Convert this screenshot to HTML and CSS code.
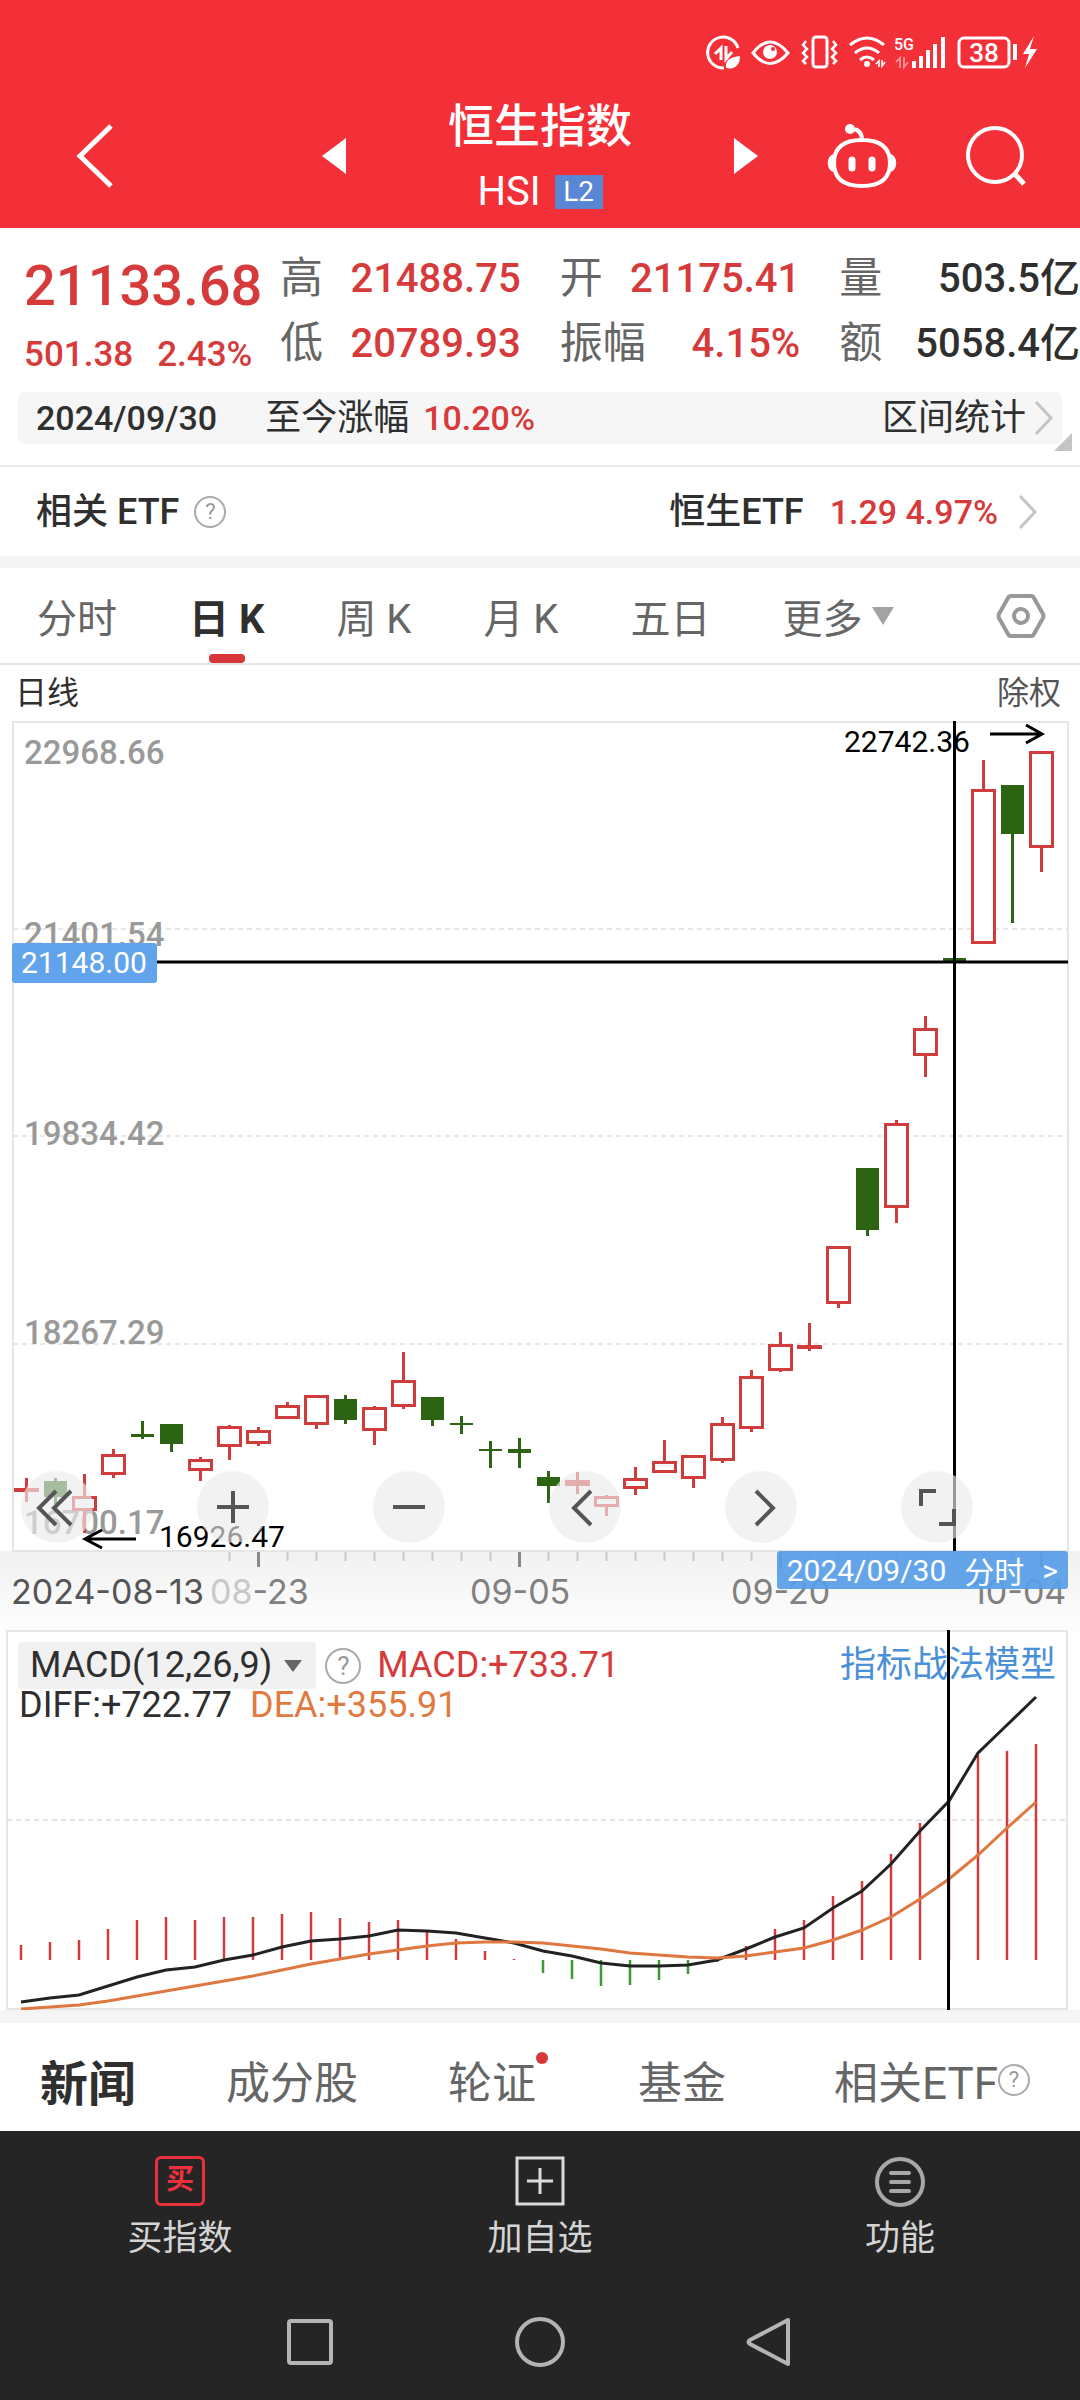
FILE: index.html
```html
<!DOCTYPE html>
<html lang="zh-CN">
<head>
<meta charset="utf-8">
<meta name="viewport" content="width=device-width">
<title>恒生指数 HSI</title>
<link rel="stylesheet" href="styles.css">
</head>
<body>
<header class="header">
  <div class="status">
    <svg class="status-icons" viewBox="702 30 336 46" fill="none" stroke="#fff" stroke-width="3">
      <path d="M738 48a15.500 15.500 0 1 0-14 20"/>
      <path d="M715 54l6-6v12M732 52l-6 7V46" stroke-width="3"/>
      <path d="M726 68c-1-8 4-11 14-12 0 9-5 14-14 12z" fill="#fff" stroke="none"/>
      <path d="M753 53q17-22 35 0q-18 21-35 0z"/>
      <circle cx="770" cy="52" r="7" fill="#fff" stroke="none"/><circle cx="773" cy="49" r="2" fill="#f32f38" stroke="none"/>
      <rect x="813" y="37" width="14" height="30" rx="3"/>
      <path d="M806 41l-3 4 4 4-4 4 4 4-4 4 3 3M833 41l3 4-4 4 4 4-4 4 4 4-3 3" stroke-width="2.5"/>
      <path d="M850 45q17-14 34 0M855 53q12-10 24 0M860 60q7-6 14 0" stroke-width="3"/>
      <circle cx="867" cy="64" r="3" fill="#fff" stroke="none"/>
      <path d="M876 64l3-3v6M885 62l-3 4v-6" stroke-width="1.6"/>
      <text x="894" y="50" class="t5g">5G</text>
      <path d="M896 62l4-4v10M908 62l-4 5V57" stroke-width="2" opacity=".45"/>
      <path d="M914 61v7M921 56v12M928 50v18M935 44v24M943 37v31" stroke-width="4"/>
      <rect x="959" y="38" width="50" height="29" rx="5"/>
      <path d="M1015 44v16" stroke-width="4"/>
      <text x="984" y="62" class="tbat">38</text>
      <path d="M1034 36l-11 18h6l-4 14 12-19h-7z" fill="#fff" stroke="none"/>
    </svg>
  </div>
  <div class="titlebar">
    <div class="side left">
      <button aria-label="返回"><svg width="38" height="64" viewBox="0 0 38 64"><path d="M35 2L4 32l31 30" fill="none" stroke="#fff" stroke-width="5"/></svg></button>
      <button aria-label="上一个"><svg width="24" height="36" viewBox="0 0 24 36"><path d="M24 0v36L0 18z" fill="#fff"/></svg></button>
    </div>
    <div class="title">
      <h1>恒生指数</h1>
      <div class="code">HSI <span class="level">L2</span></div>
    </div>
    <div class="side right">
      <button aria-label="下一个"><svg width="24" height="36" viewBox="0 0 24 36"><path d="M0 0v36l24-18z" fill="#fff"/></svg></button>
      <button aria-label="助手"><svg width="70" height="66" viewBox="0 0 70 66" fill="none" stroke="#fff" stroke-width="4"><path d="M35 17c20 0 28 9 28 23s-8 23-28 23S7 54 7 40s8-23 28-23zM35 17c0-8-4-11-11-11"/><circle cx="23" cy="6" r="5" fill="#fff" stroke="none"/><path d="M7 32c-7 1-7 15 0 16zM63 32c7 1 7 15 0 16z" fill="#fff" stroke-width="2"/><path d="M25 37v8M45 37v8" stroke-width="7" stroke-linecap="round"/></svg></button>
      <button aria-label="搜索"><svg width="60" height="62" viewBox="0 0 60 62" fill="none" stroke="#fff" stroke-width="4"><circle cx="29" cy="30" r="27"/><path d="M48 48l10 11" stroke-width="5"/></svg></button>
    </div>
  </div>
</header>

<main>
  <section class="quote">
    <div class="price">
      <strong>21133.68</strong>
      <div class="change"><span>501.38</span><span>2.43%</span></div>
    </div>
    <dl class="stats">
      <div><dt>高</dt><dd class="up">21488.75</dd></div>
      <div><dt>开</dt><dd class="up">21175.41</dd></div>
      <div><dt>量</dt><dd>503.5亿</dd></div>
      <div><dt>低</dt><dd class="up">20789.93</dd></div>
      <div><dt>振幅</dt><dd class="up">4.15%</dd></div>
      <div><dt>额</dt><dd>5058.4亿</dd></div>
    </dl>
  </section>
  <section class="range">
    <span class="date">2024/09/30</span>
    <span class="since">至今涨幅</span>
    <span class="up">10.20%</span>
    <button class="range-link">区间统计<svg width="20" height="36" viewBox="0 0 20 36"><path d="M2 2l15 16L2 34" fill="none" stroke="#c4c4c4" stroke-width="3"/></svg></button>
    <i class="corner"></i>
  </section>
  <section class="etf">
    <span>相关 ETF</span>
    <button class="help" aria-label="说明">?</button>
    <a href="#etf" class="etf-link"><span>恒生ETF</span><span class="up">1.29 4.97%</span><svg width="20" height="36" viewBox="0 0 20 36"><path d="M2 2l15 16L2 34" fill="none" stroke="#c4c4c4" stroke-width="3"/></svg></a>
  </section>
  <nav class="periods">
    <button>分时</button>
    <button class="active">日 K</button>
    <button>周 K</button>
    <button>月 K</button>
    <button>五日</button>
    <button class="more">更多<i class="caret"></i></button>
    <button class="settings" aria-label="设置"><svg width="50" height="46" viewBox="0 0 50 46" fill="none" stroke="#999" stroke-width="4"><path d="M15 3h20q2 0 3 2l9 16q1 2 0 4l-9 16q-1 2-3 2H15q-2 0-3-2L3 25q-1-2 0-4l9-16q1-2 3-2z"/><circle cx="25" cy="23" r="7"/></svg></button>
  </nav>
  <div class="caption"><span>日线</span><span class="adjust">除权</span></div>

  <section class="kline">
    <svg id="kline" viewBox="0 721 1080 899"></svg>
    <div class="tools">
      <button aria-label="最早"><svg viewBox="0 0 72 72"><path d="M35 20L18 37l17 17M50 20L33 37l17 17"/></svg></button>
      <button aria-label="放大"><svg viewBox="0 0 72 72"><path d="M36 20v32M20 36h32"/></svg></button>
      <button aria-label="缩小"><svg viewBox="0 0 72 72"><path d="M20 36h32"/></svg></button>
      <button aria-label="左移"><svg viewBox="0 0 72 72"><path d="M42 20L25 37l17 17"/></svg></button>
      <button aria-label="右移"><svg viewBox="0 0 72 72"><path d="M31 20l17 17-17 17"/></svg></button>
      <button aria-label="全屏"><svg viewBox="0 0 72 72"><path d="M20 35V20h15M53 38v15H38"/></svg></button>
    </div>
    <button class="day-tag"><span>2024/09/30</span><span>分时</span><span>&gt;</span></button>
  </section>

  <section class="macd">
    <svg id="macd" viewBox="0 1620 1080 390"></svg>
    <div class="legend">
      <button class="indicator">MACD(12,26,9)<i class="caret small"></i></button>
      <button class="help" aria-label="指标说明">?</button>
      <span class="up">MACD:+733.71</span>
      <a href="#model">指标战法模型</a>
    </div>
    <div class="legend second"><span>DIFF:+722.77</span><span class="dea">DEA:+355.91</span></div>
    <i class="cross"></i>
  </section>

  <nav class="news">
    <button class="active">新闻</button>
    <button>成分股</button>
    <button class="dot">轮证</button>
    <button>基金</button>
    <button class="with-help">相关ETF<span class="help">?</span></button>
  </nav>
</main>

<footer class="footer">
  <nav class="actions">
    <button><span class="buy">买</span>买指数</button>
    <button><svg width="50" height="50" viewBox="0 0 50 50" fill="none" stroke="#dcdcdc" stroke-width="3"><path d="M2 2h46v46H2zM25 12v26M12 25h26"/></svg>加自选</button>
    <button><svg width="52" height="52" viewBox="0 0 52 52" fill="none" stroke="#a8a8a8" stroke-width="4"><circle cx="26" cy="26" r="23"/><path d="M17 17h18M17 26h18M17 35h18" stroke-linecap="round"/></svg>功能</button>
  </nav>
  <nav class="system">
    <button aria-label="最近"><svg width="50" height="50" viewBox="0 0 50 50"><rect x="4" y="4" width="42" height="42" rx="2"/></svg></button>
    <button aria-label="主页"><svg width="50" height="50" viewBox="0 0 50 50"><circle cx="25" cy="25" r="23"/></svg></button>
    <button aria-label="后退"><svg width="50" height="50" viewBox="0 0 50 50"><path d="M43 3v44L5 27q-3-2 0-4z" stroke-linejoin="round"/></svg></button>
  </nav>
</footer>
<script src="chart.js"></script>
</body>
</html>
```

FILE: styles.css
```css
* { box-sizing: border-box; margin: 0; padding: 0; }
body { font-family: Roboto, "Noto Sans CJK SC", sans-serif; color: #2f2f2f; background: #252525; }
button { font: inherit; color: inherit; background: none; border: 0; display: flex; align-items: center; }
a { color: inherit; text-decoration: none; }
svg { display: block; }
main { background: #fff; }
.up { color: #d63a3a; }

.header { background: #f32f38; height: 228px; }
.status { height: 90px; padding: 30px 42px 0 0; display: flex; justify-content: flex-end; }
.status-icons { width: 336px; height: 46px; }
.status-icons text { fill: #fff; stroke: none; font-weight: 500; }
.t5g { font-size: 16px; }
.tbat { font-size: 26px; text-anchor: middle; }
.titlebar { display: grid; grid-template-columns: 1fr auto 1fr; align-items: center; color: #fff; }
.side { display: flex; justify-content: space-between; align-items: center; }
.left { padding: 0 102px 0 76px; }
.right { padding: 0 54px 0 102px; }
.title { text-align: center; }
.title h1 { font-size: 46px; line-height: 72px; font-weight: 500; }
.code { font-size: 40px; line-height: 60px; display: flex; justify-content: center; align-items: center; gap: 14px; }
.level { background: #5a86d6; font-size: 28px; line-height: 34px; width: 48px; }

.quote { display: flex; padding: 18px 0 8px 24px; }
.price { width: 256px; color: #d63a3a; }
.price strong { display: block; font-size: 56px; line-height: 80px; font-weight: 500; }
.change { display: flex; gap: 24px; font-size: 35px; line-height: 58px; font-weight: 500; }
.stats { flex: 1; display: grid; grid-template-columns: 1fr 1fr 1fr; column-gap: 39px; font-size: 40px; line-height: 65px; height: 138px; align-content: start; }
.stats div { display: flex; justify-content: space-between; white-space: nowrap; }
.stats dt { color: #666; font-size: 43px; }
.stats dd { font-weight: 500; }

.range { position: relative; margin: 0 18px; padding: 0 8px 0 18px; height: 52px; background: #f6f6f6; border-radius: 6px; display: flex; align-items: center; font-size: 36px; line-height: 48px; }
.since { margin: 0 14px 0 48px; }
.date, .range .up { font-weight: 500; font-size: 34px; }
.range-link { margin-left: auto; gap: 8px; }
.corner { position: absolute; right: -10px; bottom: -7px; border: 9px solid transparent; border-right-color: #c4c4c4; border-bottom-color: #c4c4c4; }

.etf { margin-top: 21px; height: 91px; border-top: 2px solid #ebebeb; padding: 0 42px 0 36px; display: flex; align-items: center; gap: 15px; font-size: 36px; font-weight: 500; line-height: 48px; }
.etf-link { margin-left: auto; display: flex; align-items: center; }
.etf-link .up { font-size: 34px; margin: 0 20px 0 26px; }
.help { width: 32px; height: 32px; border: 2px solid #aaa; border-radius: 50%; color: #999; font-size: 22px; font-weight: 400; line-height: 28px; display: flex; justify-content: center; }

.periods { height: 109px; border-top: 12px solid #f5f5f5; border-bottom: 2px solid #e6e6e6; padding: 0 34px 0 37px; display: flex; gap: 72px; font-size: 40px; color: #666; white-space: nowrap; }
.periods .active { position: relative; color: #2f2f2f; font-weight: 700; }
.active::after { content: ""; position: absolute; }
.periods .active::after { left: 50%; bottom: 0; width: 36px; height: 9px; margin-left: -18px; border-radius: 4px; background: #d9363a; }
.caret { border: 11px solid transparent; border-top: 18px solid #a3a3a3; border-bottom: 0; margin-left: 10px; }
.caret.small { border-width: 12px 9px 0; border-top-color: #666; margin-left: 12px; }
.settings { margin-left: auto; }

.caption { height: 56px; padding: 0 19px 0 15px; display: flex; justify-content: space-between; align-items: center; font-size: 32px; line-height: 48px; }
.adjust { color: #555; }

.kline, .macd { position: relative; }
.kline svg, .macd svg { width: 100%; }
.kline text { font-size: 33px; fill: #999; }
.kline .scale { font-weight: 500; }
.kline .small { font-size: 30px; font-weight: 400; fill: #000; }
.kline .onblue { font-size: 30px; fill: #fff; }
.kline .axis { font-family: Inter, sans-serif; font-size: 34px; fill: #808080; }
.kline .first { fill: #555; }
.kline .fade { fill: #c8c8c8; }
.tools { position: absolute; left: 0; right: 0; bottom: 77px; padding: 0 107px 0 21px; display: flex; justify-content: space-between; }
.tools button { width: 72px; height: 72px; border-radius: 50%; background: rgba(235, 235, 235, 0.65); }
.tools path { fill: none; stroke: #555; stroke-width: 4; }
.day-tag { position: absolute; right: 12px; bottom: 31px; height: 38px; padding: 0 10px; gap: 18px; background: rgba(88, 158, 232, 0.93); color: #fff; font-size: 30px; border-radius: 3px; }

.legend { position: absolute; top: 22px; left: 18px; right: 24px; display: flex; align-items: center; font-size: 36px; line-height: 47px; }
.legend.second { top: 62px; left: 19px; gap: 18px; }
.indicator { height: 47px; padding: 0 14px 0 12px; background: #f1f1f1; border-radius: 4px; }
.legend .help { width: 36px; height: 36px; font-size: 26px; line-height: 32px; margin: 0 16px 0 9px; }
.legend a { margin-left: auto; color: #4a90d9; }
.dea { color: #e07a3f; }
.cross { position: absolute; left: 87.7%; top: 10px; bottom: 0; width: 3px; background: #000; }

.news { height: 121px; border-top: 13px solid #f5f5f5; padding: 6px 50px 0 40px; display: flex; gap: 90px; font-size: 44px; color: #666; }
.news .active { font-size: 48px; font-weight: 700; color: #2f2f2f; }
.news .with-help { margin-left: auto; }
.dot { position: relative; padding-right: 12px; }
.dot::after { content: ""; position: absolute; right: 0; top: 23px; width: 12px; height: 12px; border-radius: 50%; background: #d9363a; }

.footer { background: #252525; color: #d4d4d4; }
.actions { display: grid; grid-template-columns: 1fr 1fr 1fr; padding-top: 25px; font-size: 35px; line-height: 52px; }
.actions button { flex-direction: column; justify-content: space-between; height: 109px; }
.buy { width: 50px; height: 50px; border: 3px solid #e8313b; border-radius: 6px; color: #f0303c; font-size: 28px; font-weight: 700; line-height: 42px; }
.system { display: flex; justify-content: center; gap: 180px; padding-top: 52px; padding-bottom: 33px; }
.system svg { fill: none; stroke: #b4b4b4; stroke-width: 4; }
```

FILE: chart.js
```js
const RED = '#d03c3c', GREEN = '#2d6413', STEP = 29;

// Each candle: direction, high, body top, body bottom, low
const candles = [
  ['r',1478,1488,1492,1502],['g',1478,1481,1497,1504],['r',1474,1496,1511,1533],['r',1449,1454,1475,1478],
  ['g',1421,1434,1437,1439],['g',1424,1424,1444,1452],['r',1457,1459,1471,1481],['r',1425,1426,1447,1460],
  ['r',1427,1430,1444,1446],['r',1402,1405,1419,1419],['r',1395,1395,1425,1429],['g',1395,1399,1420,1424],
  ['r',1406,1407,1431,1445],['r',1352,1380,1407,1409],['g',1397,1397,1420,1426],['g',1416,1423,1425,1434],
  ['g',1441,1449,1451,1468],['g',1438,1449,1453,1468],['g',1471,1477,1486,1503],['r',1472,1480,1486,1494],
  ['r',1495,1496,1507,1516],['r',1467,1478,1489,1495],['r',1440,1461,1473,1473],['r',1455,1455,1479,1488],
  ['r',1417,1423,1461,1463],['r',1370,1376,1429,1432],['r',1332,1344,1371,1372],['r',1323,1345,1349,1351],
  ['r',1246,1246,1304,1308],['g',1168,1168,1230,1236],['r',1120,1123,1208,1223],['r',1016,1028,1056,1077],
  ['g',958,958,962,962],['r',760,789,944,944],['g',785,785,834,923],['r',751,751,848,872]
];

const line = (x1, y1, x2, y2, color, w, extra = '') =>
  `<path d="M${x1} ${y1}L${x2} ${y2}" fill="none" stroke="${color}" stroke-width="${w}" ${extra}/>`;
const text = (x, y, cls, s) => `<text x="${x}" y="${y}" class="${cls}">${s}</text>`;
const dashed = 'stroke-dasharray="5 4"';

let k = '<defs><linearGradient id="shade" x2="0" y2="1"><stop stop-color="#f1f1f1"/><stop offset="1" stop-color="#fcfcfc"/></linearGradient></defs>';
k += '<rect x="0" y="1551" width="1080" height="69" fill="url(#shade)"/>';
k += '<rect x="13" y="722" width="1055" height="829" fill="none" stroke="#e6e6e6" stroke-width="2"/>';
[929, 1136, 1344].forEach(y => k += line(13, y, 1068, y, '#e0e0e0', 1.5, dashed));
[['22968.66', 764], ['21401.54', 946], ['19834.42', 1145], ['18267.29', 1344], ['16700.17', 1534]]
  .forEach(([s, y]) => k += text(24, y, 'scale', s));
for (let i = 7; i < 36; i++) {
  const major = i % 9 === 8;
  k += line(26.5 + i * STEP, 1552, 26.5 + i * STEP, major ? 1567 : 1561, major ? '#888' : '#c8c8c8', major ? 3 : 2);
}
candles.forEach(([d, hi, top, bot, lo], i) => {
  const x = 26.5 + i * STEP, c = d === 'r' ? RED : GREEN;
  k += line(x, hi, x, top, c, 3) + line(x, bot, x, lo, c, 3);
  if (d === 'g' || bot - top < 7) {
    const w = d === 'r' ? 25 : 23;
    k += `<rect x="${x - w / 2}" y="${top}" width="${w}" height="${bot - top}" fill="${c}"/>`;
  } else {
    k += `<rect x="${x - 11}" y="${top + 1.5}" width="22" height="${bot - top - 3}" fill="#fff" stroke="${c}" stroke-width="3"/>`;
  }
});
k += line(157, 962, 1068, 962, '#000', 3) + line(954.5, 721, 954.5, 1551, '#000', 3);
k += '<rect x="12" y="943" width="145" height="40" rx="3" fill="#62a4ec"/>' + text(21, 973, 'onblue', '21148.00');
k += text(844, 752, 'small', '22742.36') + '<path d="M990 734h51M1026 725l16 9-16 9" fill="none" stroke="#000" stroke-width="3"/>';
k += text(159, 1547, 'small', '16926.47') + '<path d="M136 1539H85M102 1530l-17 9 17 9" fill="none" stroke="#000" stroke-width="3"/>';
k += text(11, 1604, 'axis first', '2024-08-13') + text(210, 1604, 'axis', '<tspan class="fade">08</tspan>-23');
k += text(470, 1604, 'axis', '09-05') + text(731, 1604, 'axis', '09-20') + text(972, 1604, 'axis', '10-04');
document.getElementById('kline').innerHTML = k;

// MACD histogram ends and the two moving lines, one value per candle
const bars = [1945,1942,1940,1929,1920,1917,1920,1917,1917,1914,1912,1918,1922,1920,1932,1939,1951,1959,1973,1979,1986,1985,1980,1974,1962,1946,1929,1920,1896,1881,1854,1823,1801,1755,1751,1744];
const diff = [2002,1998,1995,1986,1977,1970,1967,1960,1955,1947,1941,1939,1936,1930,1931,1933,1938,1943,1951,1956,1963,1966,1966,1965,1960,1949,1937,1928,1908,1891,1864,1831,1801,1753,1725,1697];
const dea = [2009,2007,2005,2001,1996,1991,1986,1981,1976,1970,1964,1959,1954,1950,1946,1943,1942,1942,1943,1946,1949,1953,1955,1957,1958,1956,1952,1948,1940,1930,1917,1899,1879,1855,1828,1802];
const bx = i => 21 + i * STEP;
const poly = (a, c) => `<polyline points="${a.map((y, i) => bx(i) + ',' + y).join(' ')}" fill="none" stroke="${c}" stroke-width="3"/>`;
let m = '<rect x="0" y="1620" width="1080" height="11" fill="#fcfcfc"/>';
m += '<rect x="7" y="1631" width="1060" height="378" fill="none" stroke="#e6e6e6" stroke-width="2"/>';
m += line(7, 1820, 1067, 1820, '#dcdcdc', 1.5, dashed);
bars.forEach((y, i) => m += line(bx(i), y, bx(i), 1960, y > 1962 ? '#3c9a35' : RED, 2.5));
m += poly(diff, '#222') + poly(dea, '#df7840');
document.getElementById('macd').innerHTML = m;
```
